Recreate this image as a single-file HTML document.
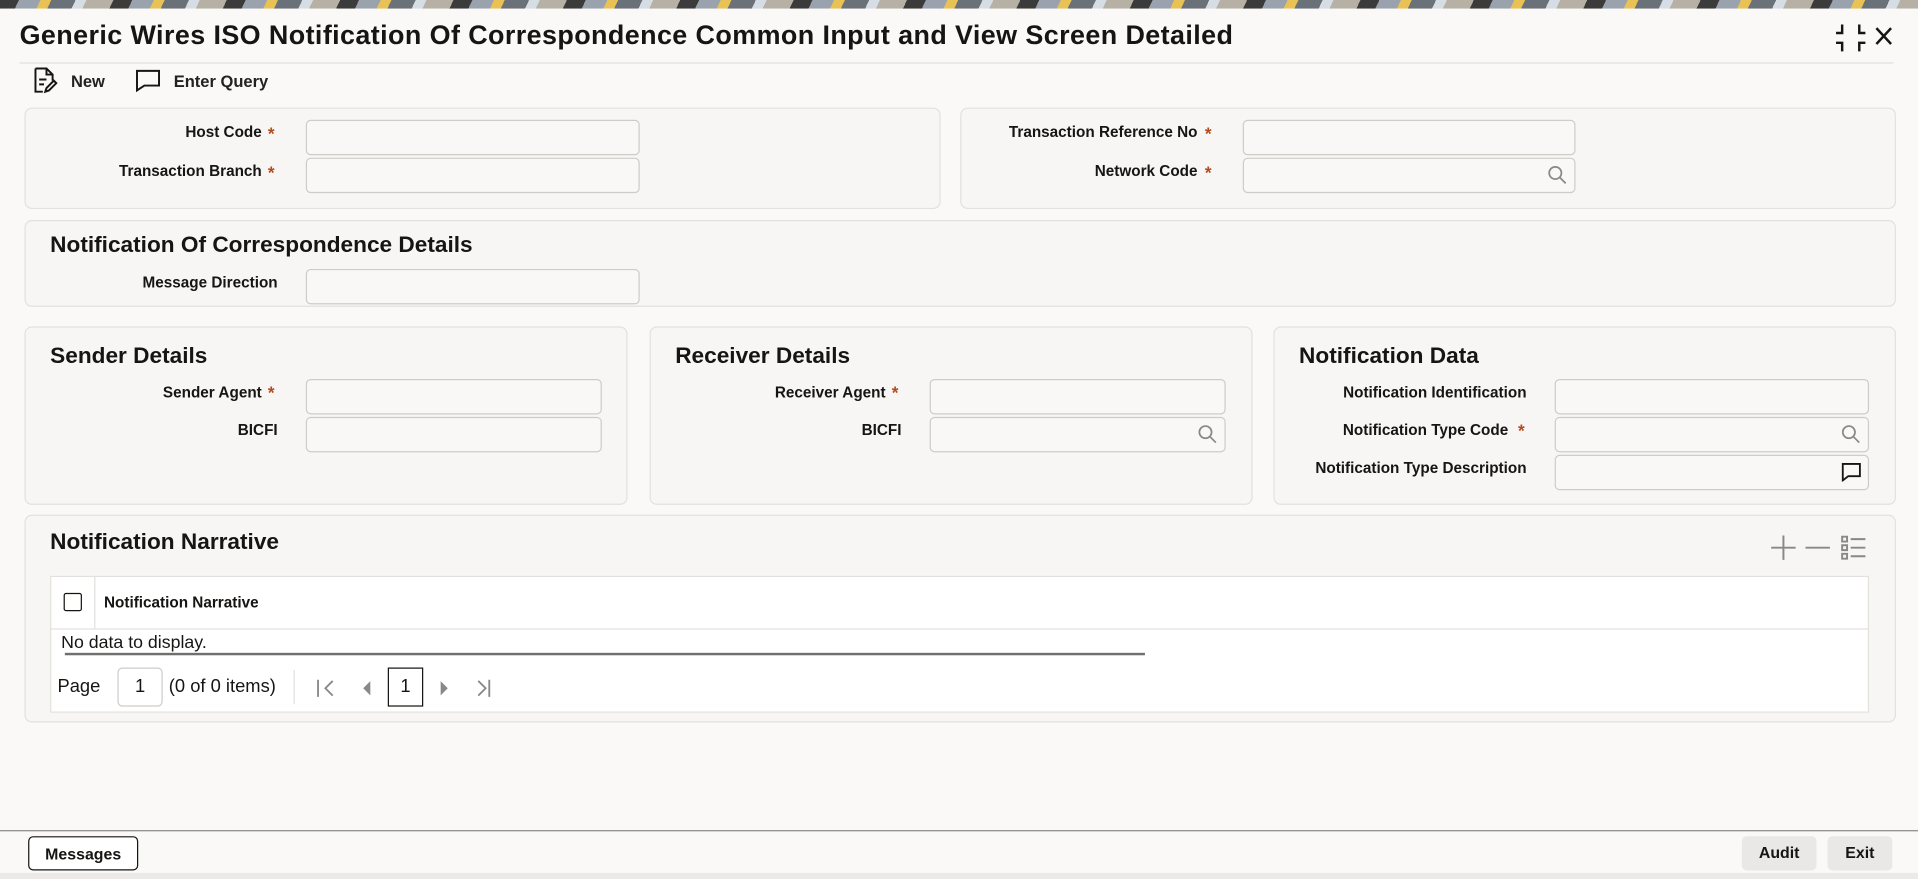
<!DOCTYPE html>
<html><head><meta charset="utf-8">
<style>
*{box-sizing:border-box;margin:0;padding:0}
html,body{width:1918px;height:879px;overflow:hidden;background:#f9f8f7}
body{font-family:"Liberation Sans",sans-serif;color:#161513}
#w{position:absolute;left:0;top:0;width:1568px;height:719px;transform:scale(1.22321,1.22253);transform-origin:0 0;background:#faf9f8}
.a{position:absolute}
.banner{left:0;top:0;width:1568px;height:7px;background:repeating-linear-gradient(115deg,#3b3b3b 0 14px,#9aa3ad 14px 30px,#e9c255 30px 38px,#6b7178 38px 56px,#d7dde4 56px 64px,#b7b0a5 64px 84px)}
.title{left:16px;top:16px;font-size:22px;font-weight:bold;letter-spacing:0.33px;white-space:nowrap}
.hr{left:16px;top:51px;width:1532px;height:1px;background:#e0dedb}
.tb{font-size:13.5px;top:59px;font-weight:bold;color:#222}
.panel{background:#f7f6f5;border:1px solid #e3e1de;border-radius:6px}
.lbl{font-size:12.5px;font-weight:bold;text-align:right;white-space:nowrap;color:#161513}
.req{color:#b34a1c;font-size:14px;font-weight:bold}
.inp{height:29px;border:1px solid #cfccc8;border-radius:4px;background:#f9f8f7}
.h{font-size:18.5px;font-weight:bold;color:#161513;white-space:nowrap}
.btn{font-size:13px;font-weight:bold;text-align:center;line-height:28px;border-radius:4px}
</style></head><body><div id="w">
<div class="a banner"></div>
<div class="a title">Generic Wires ISO Notification Of Correspondence Common Input and View Screen Detailed</div>
<svg class="a" style="left:1500px;top:19px" width="26" height="24" viewBox="0 0 26 24" fill="none" stroke="#161513" stroke-width="2"><path d="M6 1v7H1M20 1v7h5M6 23v-7H1M20 23v-7h5"/></svg>
<svg class="a" style="left:1532px;top:21px" width="16" height="17" viewBox="0 0 16 17" stroke="#161513" stroke-width="2"><path d="M2 2l12 13M14 2L2 15"/></svg>
<div class="a hr"></div>
<svg class="a" style="left:26px;top:55px" width="22" height="22" viewBox="0 0 22 22" fill="none" stroke="#161513" stroke-width="1.6"><path d="M3 1h9l5 5v5M3 1v19h6M12 1v5h5M6 10h6M6 14h4M11 20l1-3 6-6 2 2-6 6z"/></svg>
<div class="a tb" style="left:58px">New</div>
<svg class="a" style="left:110px;top:56px" width="22" height="20" viewBox="0 0 22 20" fill="none" stroke="#161513" stroke-width="1.6"><path d="M2 2h18v12H8l-6 4z"/></svg>
<div class="a tb" style="left:142px">Enter Query</div>

<div class="a panel" style="left:20px;top:88px;width:749px;height:83px"></div>
<div class="a panel" style="left:785px;top:88px;width:765px;height:83px"></div>
<div class="a lbl" style="right:1354px;top:101px">Host Code</div><div class="a req" style="left:219px;top:101px">*</div>
<div class="a inp" style="left:250px;top:98px;width:273px"></div>
<div class="a lbl" style="right:1354px;top:133px">Transaction Branch</div><div class="a req" style="left:219px;top:133px">*</div>
<div class="a inp" style="left:250px;top:129px;width:273px"></div>
<div class="a lbl" style="right:589px;top:101px">Transaction Reference No</div><div class="a req" style="left:985px;top:101px">*</div>
<div class="a inp" style="left:1016px;top:98px;width:272px"></div>
<div class="a lbl" style="right:589px;top:133px">Network Code</div><div class="a req" style="left:985px;top:133px">*</div>
<div class="a inp" style="left:1016px;top:129px;width:272px"></div>
<svg class="a" style="left:1265px;top:135px" width="16" height="16" viewBox="0 0 16 16" fill="none" stroke="#8a8784" stroke-width="1.4"><circle cx="6.5" cy="6.5" r="5"/><path d="M10 10l5 5"/></svg>

<div class="a panel" style="left:20px;top:180px;width:1530px;height:71px"></div>
<div class="a h" style="left:41px;top:189px">Notification Of Correspondence Details</div>
<div class="a lbl" style="right:1341px;top:224px">Message Direction</div>
<div class="a inp" style="left:250px;top:220px;width:273px"></div>

<div class="a panel" style="left:20px;top:267px;width:493px;height:146px"></div>
<div class="a panel" style="left:531px;top:267px;width:493px;height:146px"></div>
<div class="a panel" style="left:1041px;top:267px;width:509px;height:146px"></div>
<div class="a h" style="left:41px;top:280px">Sender Details</div>
<div class="a h" style="left:552px;top:280px">Receiver Details</div>
<div class="a h" style="left:1062px;top:280px">Notification Data</div>
<div class="a lbl" style="right:1354px;top:314px">Sender Agent</div><div class="a req" style="left:219px;top:313px">*</div>
<div class="a inp" style="left:250px;top:310px;width:242px"></div>
<div class="a lbl" style="right:1341px;top:345px">BICFI</div>
<div class="a inp" style="left:250px;top:341px;width:242px"></div>
<div class="a lbl" style="right:844px;top:314px">Receiver Agent</div><div class="a req" style="left:729px;top:313px">*</div>
<div class="a inp" style="left:760px;top:310px;width:242px"></div>
<div class="a lbl" style="right:831px;top:345px">BICFI</div>
<div class="a inp" style="left:760px;top:341px;width:242px"></div>
<svg class="a" style="left:979px;top:347px" width="16" height="16" viewBox="0 0 16 16" fill="none" stroke="#8a8784" stroke-width="1.4"><circle cx="6.5" cy="6.5" r="5"/><path d="M10 10l5 5"/></svg>
<div class="a lbl" style="right:320px;top:314px">Notification Identification</div>
<div class="a inp" style="left:1271px;top:310px;width:257px"></div>
<div class="a lbl" style="right:335px;top:345px">Notification Type Code</div><div class="a req" style="left:1241px;top:344px">*</div>
<div class="a inp" style="left:1271px;top:341px;width:257px"></div>
<svg class="a" style="left:1505px;top:347px" width="16" height="16" viewBox="0 0 16 16" fill="none" stroke="#8a8784" stroke-width="1.4"><circle cx="6.5" cy="6.5" r="5"/><path d="M10 10l5 5"/></svg>
<div class="a lbl" style="right:320px;top:376px">Notification Type Description</div>
<div class="a inp" style="left:1271px;top:372px;width:257px"></div>
<svg class="a" style="left:1505px;top:378px" width="17" height="16" viewBox="0 0 17 16" fill="none" stroke="#161513" stroke-width="1.5"><path d="M1.5 1.5h14v10H6l-4.5 3.5z"/></svg>

<div class="a panel" style="left:20px;top:421px;width:1530px;height:170px"></div>
<div class="a h" style="left:41px;top:432px">Notification Narrative</div>
<svg class="a" style="left:1447px;top:437px" width="80" height="22" viewBox="0 0 80 22" fill="none" stroke="#8a8784" stroke-width="1.6"><path d="M11 1v20M1 11h20M29 11h20M59 2h4v4h-4zM59 9h4v4h-4zM59 16h4v4h-4zM66 4h12M66 11h12M66 18h12"/></svg>
<div class="a" style="left:41px;top:471px;width:1487px;height:112px;background:#fff;border:1px solid #e3e1de"></div>
<div class="a" style="left:77px;top:472px;width:1px;height:42px;background:#e3e1de"></div>
<div class="a" style="left:42px;top:514px;width:1485px;height:1px;background:#e3e1de"></div>
<div class="a" style="left:52px;top:485px;width:15px;height:15px;border:1.6px solid #161513;border-radius:2px"></div>
<div class="a lbl" style="left:85px;top:486px;text-align:left">Notification Narrative</div>
<div class="a" style="left:50px;top:518px;font-size:14.5px">No data to display.</div>
<div class="a" style="left:53px;top:534px;width:883px;height:2px;background:#6f6f6f"></div>
<div class="a" style="left:47px;top:553px;font-size:15px">Page</div>
<div class="a" style="left:96px;top:546px;width:37px;height:32px;border:1px solid #cfccc8;border-radius:4px;font-size:15px;text-align:center;line-height:30px">1</div>
<div class="a" style="left:138px;top:553px;font-size:15px">(0 of 0 items)</div>
<div class="a" style="left:240px;top:548px;width:1px;height:28px;background:#e3e1de"></div>
<svg class="a" style="left:258px;top:555px" width="150" height="16" viewBox="0 0 150 16" fill="none" stroke="#8a8784" stroke-width="1.5"><path d="M2 1v14M14 2l-6 6 6 6"/><path d="M44 4v8l-4-4z" fill="#8a8784"/><path d="M103 4v8l4-4z" fill="#8a8784"/><path d="M133 2l6 6-6 6M142 1v14"/></svg>
<div class="a" style="left:317px;top:546px;width:29px;height:32px;border:1px solid #161513;font-size:15px;text-align:center;line-height:30px">1</div>

<div class="a" style="left:0;top:679px;width:1568px;height:1px;background:#8a8a8a"></div>
<div class="a btn" style="left:23px;top:684px;width:90px;height:28px;border:1px solid #161513;background:#fff">Messages</div>
<div class="a btn" style="left:1424px;top:684px;width:61px;height:28px;background:#e9e8e6">Audit</div>
<div class="a btn" style="left:1494px;top:684px;width:53px;height:28px;background:#e9e8e6">Exit</div>
<div class="a" style="left:0;top:714px;width:1568px;height:5px;background:#ebeae8"></div>
</div></body></html>
